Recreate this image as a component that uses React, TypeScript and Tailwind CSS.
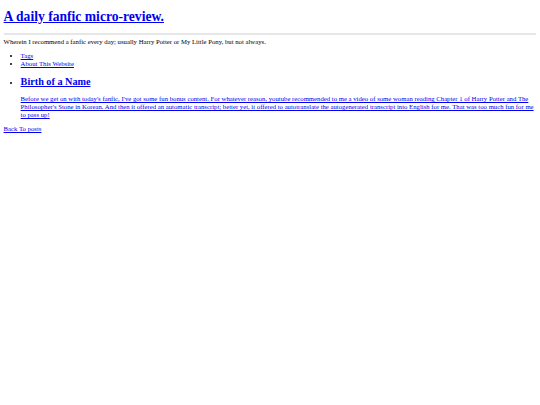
export default function App() {
  return (
    <div className="bg-white min-h-[405px] px-[3.6px] text-black text-[6.72px] leading-[8px]" style={{ fontFamily: '"Liberation Serif", "Times New Roman", serif' }}>
      <div className="pt-[9px]">
        <h1 className="text-[13.6px] leading-[16px] font-bold">
          <a href="#" className="text-[#0000ee] underline">A daily fanfic micro-review.</a>
        </h1>
      </div>
      <div className="mt-[8px] h-[2px] bg-[#e6e6e6]" />
      <p className="mt-[3px]">Wherein I recommend a fanfic every day; usually Harry Potter or My Little Pony, but not always.</p>
      <ul className="mt-[6px] pl-[17px] list-disc">
        <li><a href="#" className="text-[#0000ee] underline">Tags</a></li>
        <li><a href="#" className="text-[#0000ee] underline">About This Website</a></li>
      </ul>
      <ul className="mt-[8px] pl-[17px] list-disc">
        <li>
          <h2 className="text-[10.2px] leading-[12px] font-bold">
            <a href="#" className="text-[#0000ee] underline">Birth of a Name</a>
          </h2>
          <p className="mt-[7px]">
            <a href="#" className="text-[#0000ee] underline">Before we get on with today's fanfic, I've got some fun bonus content. For whatever reason, youtube recommended to me a video of some woman reading Chapter 1 of Harry Potter and The Philosopher's Stone in Korean. And then it offered an automatic transcript; better yet, it offered to autotranslate the autogenerated transcript into English for me. That was too much fun for me to pass up!</a>
          </p>
        </li>
      </ul>
      <p className="mt-[6px]"><a href="#" className="text-[#0000ee] underline">Back To posts</a></p>
    </div>
  );
}
